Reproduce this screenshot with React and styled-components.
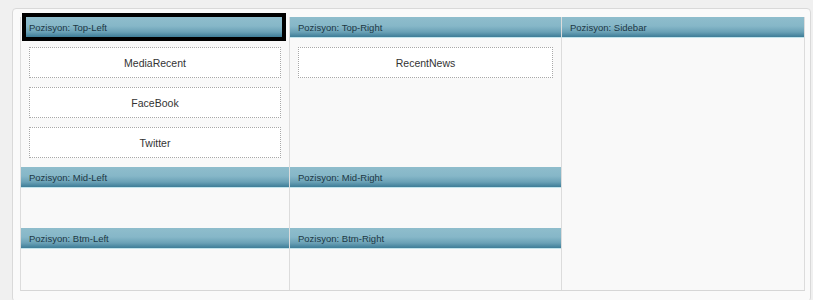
import React from 'react';
import styled, { createGlobalStyle } from 'styled-components';

const GlobalStyle = createGlobalStyle`
  body {
    margin: 0;
    background: #f0f0f0;
    font-family: "Liberation Sans", Arial, sans-serif;
  }
`

const Panel = styled.div`
  margin: 8px 0 0 12px;
  width: 799px;
  box-sizing: border-box;
  border: 1px solid #d9d9d9;
  border-radius: 4px;
  background: #fafafa;
  padding: 8px 5px 10px 7px;
`

const Layout = styled.div`
  display: grid;
  grid-template-columns: 269px 272px 243px;
  grid-template-rows: 150px 61px 62px;
  border-left: 1px solid #dcdcdc;
  border-bottom: 1px solid #d6d6d6;
  background: #f9f9f9;
`

const Cell = styled.div`
  display: flex;
  flex-direction: column;
  border-right: 1px solid #dcdcdc;
  min-width: 0;
  ${p => p.$tall && 'grid-row: 1 / span 3; grid-column: 3;'}
`

const Header = styled.div`
  height: 21px;
  flex-shrink: 0;
  box-sizing: border-box;
  display: flex;
  align-items: center;
  padding: 1px 0 0 8px;
  font-size: 9.5px;
  color: #1c3744;
  background: linear-gradient(#8fbdcc 0%, #86b7c8 45%, #6aa1b6 75%, #4b88a1 92%, #3f7d97 100%);
  border-bottom: 1px solid #c3e4ec;
`

const SelectedHeader = styled(Header)`
  border: 4px solid #000;
  height: 28px;
  margin: -4px 3px -3px 1px;
  padding-left: 3px;
`

const Body = styled.div`
  flex: 1;
  display: flex;
  flex-direction: column;
  gap: 9px;
  padding: 9px 8px 8px;
`

const Module = styled.div`
  height: 31px;
  box-sizing: border-box;
  border: 1px dotted #a8a8a8;
  background: #fff;
  display: flex;
  align-items: center;
  justify-content: center;
  font-size: 10.5px;
  color: #333;
`

const zones = [
  { name: 'Top-Left', selected: true, modules: ['MediaRecent', 'FaceBook', 'Twitter'] },
  { name: 'Top-Right', modules: ['RecentNews'] },
  { name: 'Sidebar', tall: true, modules: [] },
  { name: 'Mid-Left', modules: [] },
  { name: 'Mid-Right', modules: [] },
  { name: 'Btm-Left', modules: [] },
  { name: 'Btm-Right', modules: [] },
]

class App extends React.Component {
  render() {
    return (
      <Panel>
        <GlobalStyle />
        <Layout>
          {zones.map(zone => {
            const H = zone.selected ? SelectedHeader : Header
            return (
              <Cell key={zone.name} $tall={zone.tall}>
                <H>Pozisyon: {zone.name}</H>
                <Body>
                  {zone.modules.map(m => <Module key={m}>{m}</Module>)}
                </Body>
              </Cell>
            )
          })}
        </Layout>
      </Panel>
    );
  }
}

export default App;
